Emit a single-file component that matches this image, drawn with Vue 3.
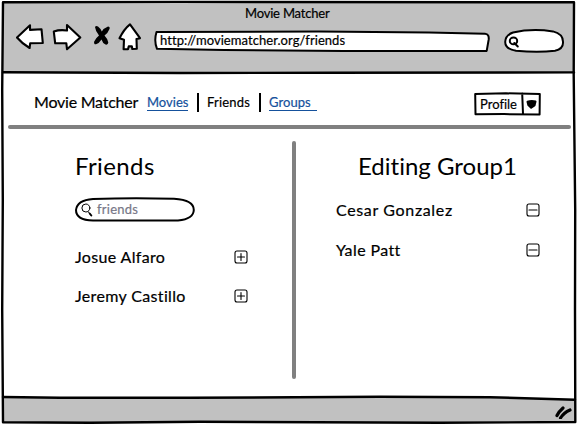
<script setup>
const friends = ['Josue Alfaro', 'Jeremy Castillo']
const members = ['Cesar Gonzalez', 'Yale Patt']
</script>

<template>
  <div class="window">
    <svg class="frame" viewBox="0 0 577 425" aria-hidden="true">
      <path class="bar" d="M3 2H574V73H3Z M3 397L455 397L574 400V422L3 422Z" />
      <path class="edge" d="M3 2.2L180 1.9L574 2.3L573.7 75L575.2 210L575 310L575.3 422L440 422.7L200 421.8L90 422.8L3 422.2L2.2 310L2.8 200L2.2 90Z" />
      <path class="edge" d="M3 72.3L180 73L330 72.7L574 72.4" />
      <path class="edge" d="M3 397L60 397.8L190 397.8L380 396.8L490 397.2L575 399.8" />
    </svg>

    <header class="chrome">
      <div class="title">Movie Matcher</div>
      <div class="tools">
        <svg class="nav-icons" width="127" height="30" viewBox="16 22 127 30">
          <g class="outline">
            <path d="M17 37.5L30 25.3L30 29.9L41.5 29.2L42.8 43L30.2 43.2L29.6 48Q22 43.5 17 37.5Z" />
            <path d="M53.8 31.5Q60 29.3 67 30.5L67 25L80.3 37.5L67 49.2L66.3 43.2L55.2 43.3Z" />
            <path d="M130 24.3L140 38.2L136.5 39L136.8 48.8L132.3 49L131.8 46.2L128.7 46.4L128 49.3L123.6 49.3L124 39.8L119.5 38.3Q124 29 130 24.3Z" />
          </g>
          <path class="cross" d="M95 27Q96 25.400 98 26.600Q100.500 28.500 101.800 31.500Q104 28 108 26.500Q110.300 26.500 109.500 29Q108 33 104.500 35.500Q107.500 38.500 108.300 42.500Q108 45.200 105.500 44.500Q102.500 43 101.500 39.500Q99 43.500 96 44.300Q93.500 44.500 94.200 41.500Q95.800 38 99 35.500Q95.500 31.500 95 27Z" />
        </svg>
        <div class="address">
          <svg class="shape" viewBox="0 0 336 22"><path d="M2.500 2L165 1.600L275 2.400L331 3.700Q335.500 4 334.600 10L332.700 20.900L190 20.900L70 19.900L3 18.800Q-.2 11 2.500 2Z" /></svg>
          <span>http://moviematcher.org/friends</span>
        </div>
        <div class="quick">
          <svg class="shape" viewBox="0 0 61 26">
            <path d="M9 4.500Q28 .2 49 3.400Q59.200 6 59 14Q59.500 21 51 22.700Q34 25 12 22.700Q1.200 21 1.200 14Q1.500 7 9 4.500Z" />
            <ellipse cx="9.500" cy="12.900" rx="3.700" ry="3.300" />
            <path d="M10.300 15L13.800 18.500" />
          </svg>
        </div>
      </div>
    </header>

    <nav class="menu">
      <span class="brand">Movie Matcher</span>
      <a class="link movies">Movies</a>
      <span class="current">Friends</span>
      <a class="link groups">Groups</a>
      <button class="profile">
        <svg class="shape" viewBox="0 0 67 24">
          <path d="M1.200 2L32 1.300L65.800 2L65.600 22.400L30 22.100L1.500 22.300Z M48.200 1.500L49 22" />
          <path class="solid" d="M53.500 9.700Q57.500 8.500 61.500 9.500L60.500 13.500L57.200 15.800L54.300 13Z" />
        </svg>
        <span>Profile</span>
      </button>
    </nav>
    <div class="rule"></div>

    <main class="panes">
      <section class="left">
        <h1>Friends</h1>
        <div class="search">
          <svg class="shape" viewBox="0 0 120 25">
            <path d="M18 1.900Q60 .8 99 1.800Q118.800 3 118.800 13Q118.500 22 103 23.500L18 23.600Q1 23 1 13Q2 3 18 1.900Z" />
            <g class="lens"><ellipse cx="10.900" cy="11" rx="4" ry="4" /><path d="M13 14.500L15 17" /><path class="grip" d="M14.700 16.500L16.300 18.500" /></g>
          </svg>
          <span>friends</span>
        </div>
        <ul>
          <li v-for="name in friends" :key="name">
            <span>{{ name }}</span>
            <svg class="toggle" width="14" height="14" viewBox="0 0 14 14"><rect x="1" y="1" width="12" height="12" rx="2" /><path d="M3.500 7H10.500M7 3.500V10.500" /></svg>
          </li>
        </ul>
      </section>
      <div class="divider"></div>
      <section class="right">
        <h1>Editing Group1</h1>
        <ul>
          <li v-for="name in members" :key="name">
            <span>{{ name }}</span>
            <svg class="toggle" width="14" height="14" viewBox="0 0 14 14"><rect x="1" y="1" width="12" height="12" rx="2" /><path d="M3 7H11" /></svg>
          </li>
        </ul>
      </section>
    </main>

    <footer>
      <svg width="18" height="14" viewBox="0 0 18 14"><path d="M2 10.500Q4 6.500 8 3M5.500 13Q9 7.500 15 5" /></svg>
    </footer>
  </div>
</template>

<style>
body { margin: 0; background: #fff; }
</style>

<style scoped>
* { box-sizing: border-box; }
.window {
  position: relative;
  width: 577px;
  height: 425px;
  display: flex;
  flex-direction: column;
  overflow: hidden;
  font-family: Lato, "Open Sans", sans-serif;
  font-size: 13px;
  font-variant-ligatures: none;
  -webkit-text-stroke: .2px currentColor;
  color: #000;
  white-space: nowrap;
}
svg { display: block; fill: none; stroke: #000; stroke-linecap: round; stroke-linejoin: round; }
.frame { position: absolute; inset: 0; width: 577px; height: 425px; }
.bar { fill: #c1c1c1; stroke: none; }
.edge { stroke-width: 2.4; }
.chrome { position: relative; height: 73px; }
.title { height: 22px; padding: 4px 0 0 245px; line-height: 18px; letter-spacing: -.2px; }
.tools { display: flex; align-items: flex-start; padding-left: 16px; }
.nav-icons { stroke-width: 2.1; }
.outline { fill: #fff; }
.cross { fill: #000; stroke: none; }
.address, .quick, .profile, .search { position: relative; }
.shape { position: absolute; inset: 0; width: 100%; height: 100%; fill: #fff; stroke-width: 2; }
.shape .solid { fill: #000; }
.address span, .profile span, .search span { position: relative; }
.address { width: 336px; height: 22px; margin: 8px 0 0 11px; padding-left: 6px; line-height: 21px; letter-spacing: .06px; }
.quick { width: 61px; height: 26px; margin: 6px 0 0 14px; }
.menu { position: relative; display: flex; align-items: center; height: 52px; padding: 6px 36px 0 34px; }
.brand { width: 113px; margin-top: -2px; font-size: 16px; letter-spacing: -.23px; }
.link { color: #15519c; line-height: 16px; border-bottom: 1px solid #15519c; }
.movies { width: 41px; }
.groups { width: 48px; letter-spacing: .05px; }
.current { width: 64px; margin: 0 8px 0 9px; padding-left: 8px; line-height: 19px; letter-spacing: .2px; border: solid #000; border-width: 0 2px; }
.profile { width: 67px; height: 24px; margin-left: auto; margin-top: 4px; padding: 0 0 0 6px; border: 0; background: none; color: #000; font: inherit; line-height: 23px; text-align: left; }
.rule { position: relative; width: 563px; height: 4px; margin-left: 8px; border-radius: 2px; background: #808080; }
.panes { position: relative; display: flex; height: 268px; }
.left { width: 292px; padding: 21px 44px 0 75px; }
.right { padding: 21px 37px 0 40px; width: 281px; }
.divider { width: 4px; height: 238px; margin-top: 12px; border-radius: 2px; background: #808080; }
h1 { margin: 0; font-size: 24px; line-height: 32px; font-weight: 400; letter-spacing: .4px; -webkit-text-stroke: 0; }
.right h1 { padding-left: 22px; letter-spacing: 0; }
.search { width: 120px; height: 25px; margin-top: 15px; padding-left: 22px; line-height: 24px; letter-spacing: .25px; color: #787888; }
.lens { stroke-width: 1; }
.grip { stroke-width: 2; }
ul { list-style: none; margin: 0; padding: 0; font-size: 16px; }
li { display: flex; align-items: center; justify-content: space-between; height: 40px; }
.left ul { padding-top: 15px; letter-spacing: .35px; }
.left li { height: 39px; }
.right ul { padding-top: 8px; letter-spacing: .65px; }
.right li span { margin-top: -2px; }
.right li + li { letter-spacing: .4px; }
.toggle { stroke-width: 1.1; }
footer { position: relative; display: flex; justify-content: flex-end; padding: 8px 4px 0 0; }
footer svg { stroke-width: 3.2; }
</style>
